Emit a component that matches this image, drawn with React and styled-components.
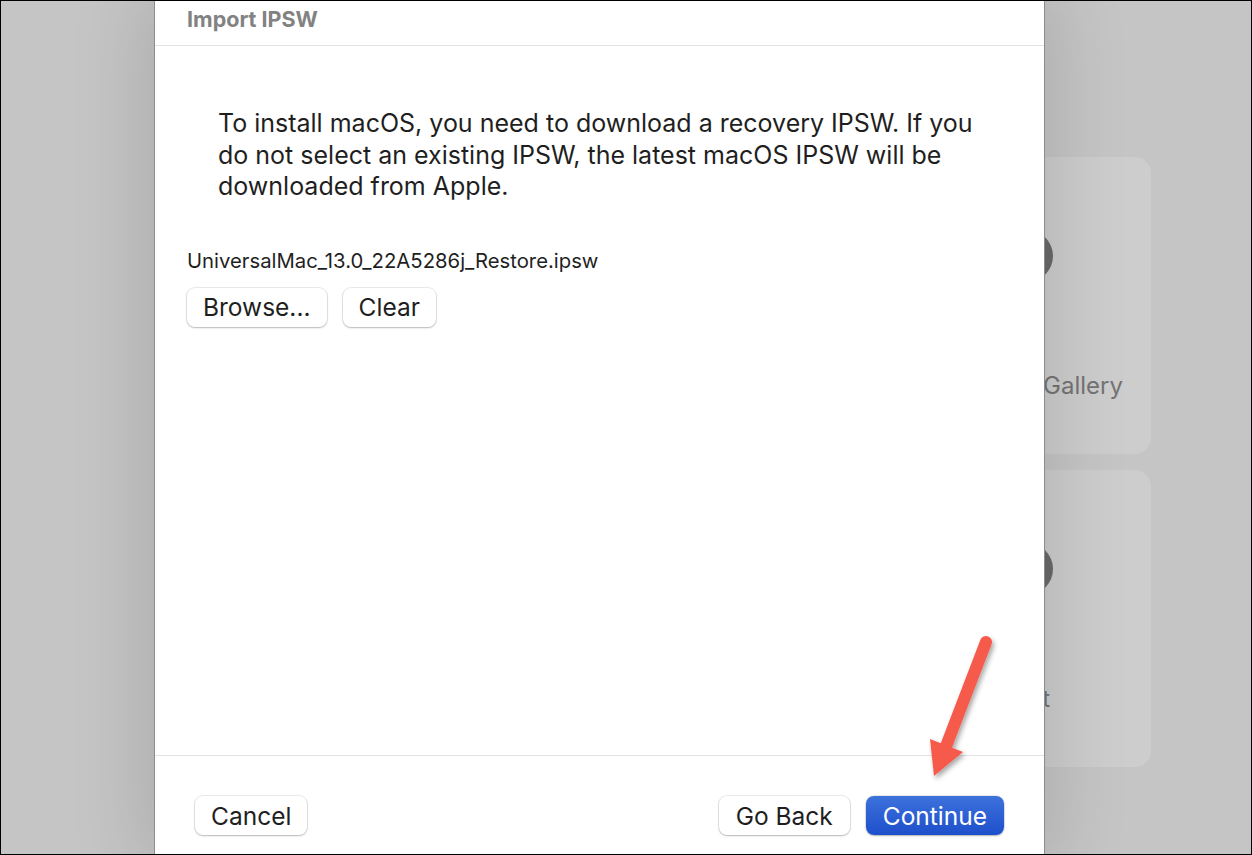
import React from "react";
import styled, { createGlobalStyle } from "styled-components";

const Global = createGlobalStyle`
  html, body { margin: 0; padding: 0; }
  body { font-family: Inter, "Noto Sans", "Liberation Sans", sans-serif; }
  * { box-sizing: border-box; }
`;

const Screen = styled.div`
  position: relative;
  width: 1252px;
  height: 855px;
  overflow: hidden;
  background: #c5c5c5;
  border: 1px solid #000;
`;

const BackApp = styled.div`
  display: flex;
  justify-content: flex-end;
  padding: 156px 100px 0 0;
`;

const CardColumn = styled.div`
  display: flex;
  flex-direction: column;
  gap: 16px;
`;

const Card = styled.div`
  width: 248px;
  height: 297px;
  border-radius: 16px;
  background: #cdcdcd;
  display: flex;
  flex-direction: column;
  align-items: center;
  padding-top: 73px;
`;

const CardIcon = styled.div`
  width: 52px;
  height: 52px;
  border-radius: 50%;
  background: #6a6a6a;
`;

const CardLabel = styled.div`
  align-self: stretch;
  display: flex;
  justify-content: flex-end;
  white-space: nowrap;
  padding-right: ${(p) => p.$pr}px;
  margin-top: 89px;
  font-size: 24px;
  color: #747474;
`;

const Dialog = styled.div`
  position: absolute;
  left: 153px;
  top: -1px;
  width: 891px;
  height: 856px;
  background: #fff;
  border-left: 1px solid #8c8c8c;
  border-right: 1px solid #8c8c8c;
  box-shadow: 0 0 70px 10px rgba(0, 0, 0, 0.13);
  display: flex;
  flex-direction: column;
`;

const Header = styled.div`
  height: 46px;
  padding: 6px 0 0 32px;
  border-bottom: 1px solid #e3e3e3;
  font-size: 21.5px;
  font-weight: 700;
  color: #828282;
`;

const Body = styled.div`
  flex: 1;
  padding: 62px 31px 0 32px;
  display: flex;
  flex-direction: column;
`;

const Message = styled.p`
  margin: 0 0 0 31px;
  font-size: 25px;
  line-height: 31.5px;
  color: #1f1f1f;
  max-width: 775px;
`;

const FileName = styled.div`
  margin-top: 45px;
  font-size: 20.3px;
  color: #1f1f1f;
`;

const ButtonRow = styled.div`
  display: flex;
  gap: 16px;
  margin-top: 15px;
`;

const Button = styled.button`
  height: 39px;
  padding: 0 ${(p) => p.$px || 16}px;
  border-radius: 8px;
  border: none;
  font-family: inherit;
  font-size: 24.5px;
  color: ${(p) => (p.$primary ? "#fff" : "#1f1f1f")};
  background: ${(p) =>
    p.$primary ? "linear-gradient(#3d72dc, #1d4fcb)" : "#fff"};
  box-shadow: ${(p) =>
    p.$primary
      ? "0 0 0 0.5px rgba(0,0,0,0.15), 0 1px 2px rgba(0,0,0,0.25)"
      : "0 0 0 1px rgba(0,0,0,0.08), 0 1px 2px rgba(0,0,0,0.22)"};
`;

const Footer = styled.div`
  height: 101px;
  border-top: 1px solid #e3e3e3;
  display: flex;
  align-items: flex-start;
  padding: 40px 40px 0 40px;
`;

const Spacer = styled.div`
  flex: 1;
`;

const FooterRight = styled.div`
  display: flex;
  gap: 16px;
`;

const ArrowSvg = styled.svg`
  position: absolute;
  left: 900px;
  top: 620px;
  overflow: visible;
`;

function Arrow() {
  return (
    <ArrowSvg width="120" height="180" viewBox="0 0 120 180">
      <defs>
        <filter id="sh" x="-50%" y="-50%" width="200%" height="200%">
          <feDropShadow dx="2" dy="3" stdDeviation="2.5" floodColor="#000" floodOpacity="0.35" />
        </filter>
      </defs>
      <g filter="url(#sh)">
        <line x1="85" y1="21" x2="44" y2="128" stroke="#f65a4b" strokeWidth="12" strokeLinecap="round" />
        <polygon points="29,118 62,131 33,155" fill="#f65a4b" />
      </g>
    </ArrowSvg>
  );
}

export default function App() {
  return (
    <>
      <Global />
      <Screen>
        <BackApp>
          <CardColumn>
            <Card>
              <CardIcon />
              <CardLabel $pr={28}>Browse UTM Gallery</CardLabel>
            </Card>
            <Card>
              <CardIcon />
              <CardLabel $pr={101}>Support</CardLabel>
            </Card>
          </CardColumn>
        </BackApp>
        <Dialog>
          <Header>Import IPSW</Header>
          <Body>
            <Message>
              To install macOS, you need to download a recovery IPSW. If you do
              not select an existing IPSW, the latest macOS IPSW will be
              downloaded from Apple.
            </Message>
            <FileName>UniversalMac_13.0_22A5286j_Restore.ipsw</FileName>
            <ButtonRow>
              <Button>Browse...</Button>
              <Button>Clear</Button>
            </ButtonRow>
          </Body>
          <Footer>
            <Button>Cancel</Button>
            <Spacer />
            <FooterRight>
              <Button $px={17}>Go Back</Button>
              <Button $primary $px={17}>Continue</Button>
            </FooterRight>
          </Footer>
        </Dialog>
        <Arrow />
      </Screen>
    </>
  );
}
